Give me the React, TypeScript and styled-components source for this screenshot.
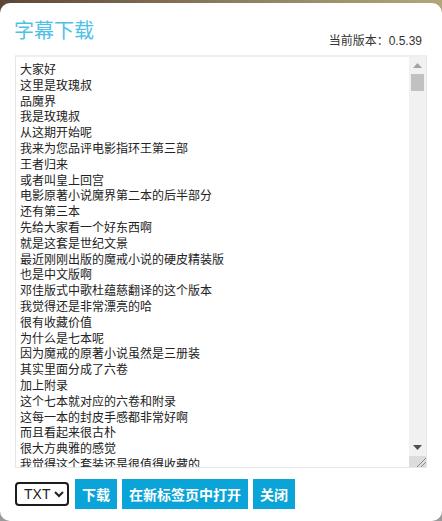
import React from "react";
import styled, { createGlobalStyle } from "styled-components";

const Global = createGlobalStyle`
  html, body { margin: 0; padding: 0; }
  body {
    height: 521px;
    overflow: hidden;
    background: linear-gradient(to bottom, rgba(0,0,0,0) 0, rgba(0,0,0,0) 60%, #9a9a9a 100%),
      linear-gradient(to right, #5b4636 0%, #8c7a5c 50%, #b3a67c 100%);
    font-family: "Noto Sans CJK SC", "Liberation Sans", sans-serif;
  }
`;

const Dialog = styled.div`
  box-sizing: border-box;
  margin-top: 3px;
  height: 518px;
  background: #fff;
  border-radius: 10px;
  padding: 0 15px;
  display: flex;
  flex-direction: column;
`;

const Header = styled.div`
  display: flex;
  align-items: flex-end;
  justify-content: space-between;
  height: 52px;
`;

const Title = styled.h1`
  margin: 0 0 13px -1px;
  font-size: 20px;
  font-weight: normal;
  line-height: 24px;
  color: #4ec1e8;
  font-family: "Noto Sans CJK SC", sans-serif;
`;

const Version = styled.span`
  margin: 0 5px 6px 0;
  font-size: 12px;
  line-height: 16px;
  color: #333;
  font-family: "Liberation Sans", "Noto Sans CJK SC", sans-serif;
`;

const TextFrame = styled.div`
  box-sizing: border-box;
  width: 412px;
  height: 413px;
  display: flex;
  border: 1px solid #e6e6ee;
  border-top: 2px solid #eeeef5;
  background: #fff;
`;

const TextContent = styled.div`
  flex: 1;
  overflow: hidden;
  padding: 4px 4px 0;
  font-size: 12px;
  line-height: 15.8px;
  color: #222;
  white-space: pre;
  font-family: "Noto Sans CJK SC", sans-serif;
`;

const ScrollBar = styled.div`
  width: 17px;
  display: flex;
  flex-direction: column;
  background: #f1f1f1;
`;

const ArrowButton = styled.div`
  height: 17px;
  display: flex;
  align-items: center;
  justify-content: center;
`;

const Track = styled.div`
  flex: 1;
  padding: 0 2px;
`;

const Thumb = styled.div`
  height: 17px;
  background: #c1c1c1;
`;

const Corner = styled.div`
  height: 11px;
  background: #dcdcdc;
  display: flex;
  align-items: flex-end;
  justify-content: flex-end;
`;

const Actions = styled.div`
  display: flex;
  align-items: center;
  gap: 5px;
  margin-top: 11px;
`;

const Select = styled.select`
  box-sizing: border-box;
  width: 54px;
  height: 24px;
  border: 2px solid #1c1c1c;
  border-radius: 4px;
  background: #fff;
  color: #222;
  font-size: 14px;
  font-family: "Liberation Sans", sans-serif;
  padding: 0 0 0 3px;
  margin-right: 1px;
`;

const Button = styled.button`
  height: 30px;
  border: none;
  border-radius: 0;
  background: #0aa4d8;
  color: #fff;
  font-size: 14px;
  font-weight: bold;
  padding: 0 7px;
  font-family: "Noto Sans CJK SC", sans-serif;
  cursor: pointer;
`;

const lines = [
  "大家好",
  "这里是玫瑰叔",
  "品魔界",
  "我是玫瑰叔",
  "从这期开始呢",
  "我来为您品评电影指环王第三部",
  "王者归来",
  "或者叫皇上回宫",
  "电影原著小说魔界第二本的后半部分",
  "还有第三本",
  "先给大家看一个好东西啊",
  "就是这套是世纪文景",
  "最近刚刚出版的魔戒小说的硬皮精装版",
  "也是中文版啊",
  "邓佳版式中歌杜蕴慈翻译的这个版本",
  "我觉得还是非常漂亮的哈",
  "很有收藏价值",
  "为什么是七本呢",
  "因为魔戒的原著小说虽然是三册装",
  "其实里面分成了六卷",
  "加上附录",
  "这个七本就对应的六卷和附录",
  "这每一本的封皮手感都非常好啊",
  "而且看起来很古朴",
  "很大方典雅的感觉",
  "我觉得这个套装还是很值得收藏的",
];

export default function App() {
  return (
    <>
      <Global />
      <Dialog>
        <Header>
          <Title>字幕下载</Title>
          <Version>当前版本：0.5.39</Version>
        </Header>
        <TextFrame>
          <TextContent>{lines.join("\n")}</TextContent>
          <ScrollBar>
            <ArrowButton>
              <svg width="9" height="5" viewBox="0 0 9 5">
                <polygon points="0,5 9,5 4.5,0" fill="#a3a3a3" />
              </svg>
            </ArrowButton>
            <Track>
              <Thumb />
            </Track>
            <ArrowButton>
              <svg width="9" height="5" viewBox="0 0 9 5">
                <polygon points="0,0 9,0 4.5,5" fill="#505050" />
              </svg>
            </ArrowButton>
            <Corner>
              <svg width="11" height="11" viewBox="0 0 11 11">
                <line x1="2" y1="11" x2="11" y2="2" stroke="#8a8a8a" strokeWidth="1" />
                <line x1="6" y1="11" x2="11" y2="6" stroke="#8a8a8a" strokeWidth="1" />
              </svg>
            </Corner>
          </ScrollBar>
        </TextFrame>
        <Actions>
          <Select defaultValue="txt">
            <option value="txt">TXT</option>
            <option value="srt">SRT</option>
          </Select>
          <Button>下载</Button>
          <Button>在新标签页中打开</Button>
          <Button>关闭</Button>
        </Actions>
      </Dialog>
    </>
  );
}
